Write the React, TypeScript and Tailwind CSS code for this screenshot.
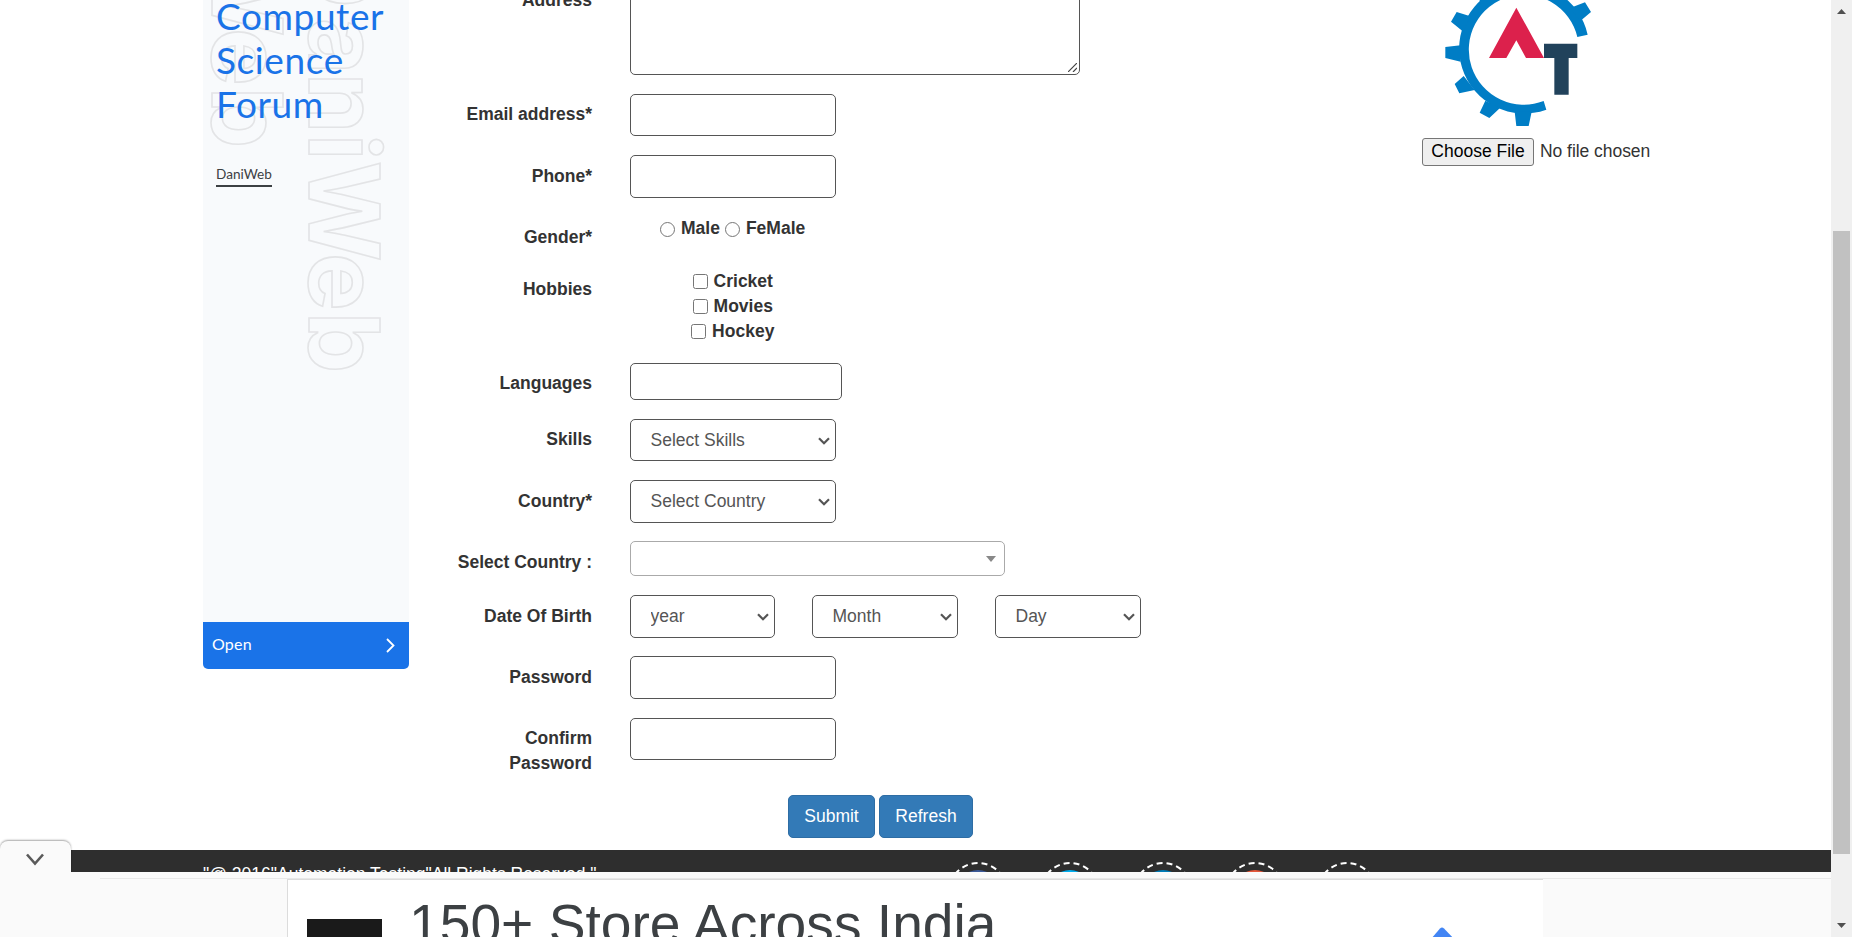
import React from "react";

function Row({ label, className, children }: { label: string; className: string; children: React.ReactNode }) {
  return (
    <div className={`flex items-start gap-[38px] ${className}`}>
      <label className="w-[140px] pt-[8.5px] text-right font-bold leading-[25px]">{label}</label>
      {children}
    </div>
  );
}

const field = "h-[42.5px] rounded-[5px] border border-[#555] bg-white px-[15px]";

function TextField({ type = "text" }: { type?: string }) {
  return <input type={type} className={`${field} w-[206px]`} />;
}

function Dropdown({ text, className }: { text: string; className: string }) {
  return (
    <div className={`relative ${className}`}>
      <select className={`${field} w-full appearance-none pl-[19.5px] text-[#555]`}>
        <option>{text}</option>
      </select>
      <svg className="pointer-events-none absolute right-[6px] top-[18px] h-[8px] w-[12px]" viewBox="0 0 12 8" fill="none" stroke="#555" strokeWidth="2.2">
        <path d="M1 1.2 6 6.2 11 1.2" />
      </svg>
    </div>
  );
}

function SideAd() {
  return (
    <aside className="relative flex h-[669px] w-[206px] shrink-0 flex-col overflow-hidden rounded-b-[5px] bg-[#f8fafc]">
      <svg className="absolute left-0 top-0 h-[400px] w-[206px]" viewBox="0 0 206 400" fill="none" stroke="#e3e4e6" strokeWidth="1.6" fontFamily="Inter" fontWeight="700" fontSize="97">
        <text transform="translate(105.500 0) rotate(90)" x="-62 18 73 134 161 253 312">DaniWeb</text>
        <text transform="translate(8.500 0) rotate(90)" x="-64 28 87">Web</text>
      </svg>
      <div className="relative flex h-[622px] flex-col items-start pl-[13px]">
        <div className="-mt-[6px] font-['Lato'] text-[37px] leading-[44px] tracking-[0.6px] text-[#1a73e8]">
          <div>Computer</div>
          <div>Science</div>
          <div>Forum</div>
        </div>
        <div className="mt-[39px] h-[22px] border-b-2 border-[#3c4043] font-['Lato'] text-[13.6px] leading-[19px] text-[#3c4043]">DaniWeb</div>
      </div>
      <div className="relative flex h-[47px] items-center justify-between bg-[#1a73e8] pl-[9px] pr-[14px] font-['Lato'] text-[16px] text-white">
        <span className="-mt-[4px] tracking-[0.2px]">Open</span>
        <svg className="-mt-px h-[15px] w-[9px]" viewBox="0 0 9 15" fill="none" stroke="white" strokeWidth="1.8">
          <path d="M1 1 7.5 7.5 1 14" />
        </svg>
      </div>
    </aside>
  );
}

function Form() {
  return (
    <form className="flex w-[730px] shrink-0 flex-col gap-[18.75px]">
      <Row label="Address" className="-mt-[21px] h-[96px]">
        <div className="relative">
          <textarea className="block h-[96px] w-[450px] resize-none rounded-[5px] border border-[#555] bg-white" />
          <svg className="absolute bottom-[3px] right-[3px] h-[9px] w-[9px]" viewBox="0 0 9 9" stroke="#444" strokeWidth="1.2">
            <path d="M0 9 9 0M5 9 9 5" />
          </svg>
        </div>
      </Row>
      <Row label="Email address*" className="h-[42.5px]"><TextField /></Row>
      <Row label="Phone*" className="h-[42.5px]"><TextField /></Row>
      <Row label="Gender*" className="h-[33.75px]">
        <div className="flex items-center pl-[30px] font-bold leading-[25px]">
          <input type="radio" name="gender" className="mr-[6px] mt-[1px] h-[15px] w-[15px]" />
          <span className="mr-[5px]">Male</span>
          <input type="radio" name="gender" className="mr-[6px] mt-[1px] h-[15px] w-[15px]" />
          <span>FeMale</span>
        </div>
      </Row>
      <Row label="Hobbies" className="h-[75px]">
        <div className="flex w-[205.5px] flex-col items-center font-bold leading-[25px]">
          {["Cricket", "Movies", "Hockey"].map((hobby) => (
            <div key={hobby} className="flex items-center">
              <input type="checkbox" className="mr-[6px] mt-[1px] h-[15px] w-[15px]" />
              <span>{hobby}</span>
            </div>
          ))}
        </div>
      </Row>
      <Row label="Languages" className="h-[37.5px]">
        <div className="h-[37.5px] w-[212px] rounded-[5px] border border-[#555]" />
      </Row>
      <Row label="Skills" className="h-[42.5px]"><Dropdown text="Select Skills" className="w-[206px]" /></Row>
      <Row label="Country*" className="h-[42.5px]"><Dropdown text="Select Country" className="w-[206px]" /></Row>
      <Row label="Select Country :" className="h-[35px]">
        <div className="flex h-[35px] w-[375px] items-center justify-end rounded-[5px] border border-[#aaa] pr-[8px]">
          <svg className="h-[6px] w-[10px]" viewBox="0 0 10 6"><path d="M0 0h10L5 6z" fill="#888" /></svg>
        </div>
      </Row>
      <Row label="Date Of Birth" className="h-[42.5px]">
        <div className="flex gap-[37px]">
          <Dropdown text="year" className="w-[145px]" />
          <Dropdown text="Month" className="w-[146px]" />
          <Dropdown text="Day" className="w-[146px]" />
        </div>
      </Row>
      <Row label="Password" className="h-[42.5px]"><TextField type="password" /></Row>
      <Row label="Confirm Password" className="h-[58.75px]"><TextField type="password" /></Row>
      <div className="flex gap-1 pl-[336px]">
        <button type="button" className="h-[42.5px] w-[87px] rounded-[5px] border border-[#2e6da4] bg-[#337ab7] text-white">Submit</button>
        <button type="button" className="h-[42.5px] w-[94px] rounded-[5px] border border-[#2e6da4] bg-[#337ab7] text-white">Refresh</button>
      </div>
    </form>
  );
}

function Photo() {
  return (
    <div className="flex flex-col">
      <svg className="ml-[22px] h-[128px] w-[150px]" viewBox="132 0 450 384">
        <g fill="#007dc5">
          <path d="M563 104A195 195 0 1 0 439 329L431 303A165 165 0 1 1 532 111Z" />
          <path d="M510 24 555 7 573 36 540 64ZM211 49 170 36 153 65 190 95ZM182 136 136 141V174L182 185ZM191 228 164 252 178 280 224 270ZM256 302 239 338 268 354 300 324ZM344 335 349 378H386L395 335ZM242 14 232 -28 268 -44 296 -10Z" />
        </g>
        <path d="M349 23 432 174H378L349 121 319 174H267Z" fill="#dc214c" />
        <path d="M432 131H532V174H506V284H463V174H432Z" fill="#21425b" />
      </svg>
      <div className="mt-[10px] flex items-center gap-[6px]">
        <button type="button" className="h-[28px] w-[112px] rounded-[3px] border border-[#767676] bg-[#efefef] pb-[2px] leading-[24px] text-black">Choose File</button>
        <span className="-mt-[2px] leading-[26px] tracking-[-0.05px]">No file chosen</span>
      </div>
    </div>
  );
}

function Footer() {
  const colors = ["#3b5998", "#00aced", "#007bb6", "#e4583c", "#2e2e2e"];
  return (
    <footer className="flex h-[22px] items-start overflow-hidden bg-[#2e2e2e] pl-[203px] text-white">
      <div className="mt-[12px] w-[745px] whitespace-nowrap leading-[25px]">"@ 2016"Automation Testing"All Rights Reserved."</div>
      <div className="mt-[12px] flex gap-[32.3px]">
        {colors.map((color) => (
          <svg key={color} className="h-[60px] w-[60px]" viewBox="0 0 60 60">
            <circle cx="30" cy="30" r="29" fill="none" stroke="white" strokeWidth="2" strokeDasharray="6 4" />
            <circle cx="30" cy="30" r="22" fill={color} />
          </svg>
        ))}
      </div>
    </footer>
  );
}

function BottomAd() {
  return (
    <div className="relative h-[65px] bg-[#fafafa]">
      <div className="absolute -top-[31px] left-0 flex h-[32px] w-[71px] items-center justify-center rounded-t-[8px] bg-[#fafafa] pr-[2px] pt-[5px] shadow-[0_-1px_2px_rgba(0,0,0,0.35)]">
        <svg className="h-[13px] w-[18px]" viewBox="0 0 18 13" fill="none" stroke="#5a5a5a" strokeWidth="2.6">
          <path d="M1 1.5 9 10.5 17 1.5" />
        </svg>
      </div>
      <div className="relative flex h-full flex-col bg-[#fafafa]">
        <div className="ml-[100px] mt-[6px] h-px bg-[#e8e8e8]" />
        <div className="ml-[287px] flex h-[58px] w-[1256px] overflow-hidden border-l border-t border-[#dcdcdc] bg-white">
          <div className="ml-[19px] mt-[39px] h-[20px] w-[75px] shrink-0 bg-[#1a1a1a]" />
          <div className="ml-[27px] mt-[12px] w-[1013px] whitespace-nowrap text-[55.2px] leading-[64px] text-[#3c4043]">150+ Store Across India</div>
          <svg className="mt-[47px] h-[22px] w-[40px] shrink-0" viewBox="0 0 40 22"><path d="M2 20 18 1.6Q20 -.4 22 1.6L40 20Z" fill="#4285f4" /></svg>
        </div>
      </div>
    </div>
  );
}

function Scrollbar() {
  return (
    <div className="flex h-full w-[21px] shrink-0 flex-col items-center justify-between bg-[#f0f0f0]">
      <svg className="mt-[9px] h-[5px] w-[9px]" viewBox="0 0 9 5"><path d="M0 5h9L4.500 0z" fill="#505050" /></svg>
      <div className="mt-[217px] h-[623px] w-[17px] bg-[#c1c1c1]" />
      <svg className="mb-[9px] mt-auto h-[5px] w-[9px]" viewBox="0 0 9 5"><path d="M0 0h9L4.500 5z" fill="#505050" /></svg>
    </div>
  );
}

export default function App() {
  return (
    <div className="flex h-screen w-full overflow-hidden bg-white font-['Liberation_Sans',Arial,sans-serif] text-[17.5px] text-[#333]">
      <div className="flex min-w-0 flex-1 flex-col">
        <div className="flex h-[850px] items-start overflow-hidden pl-[203px]">
          <SideAd />
          <div className="ml-[43px] flex items-start gap-[240px]">
            <Form />
            <Photo />
          </div>
        </div>
        <Footer />
        <BottomAd />
      </div>
      <Scrollbar />
    </div>
  );
}
